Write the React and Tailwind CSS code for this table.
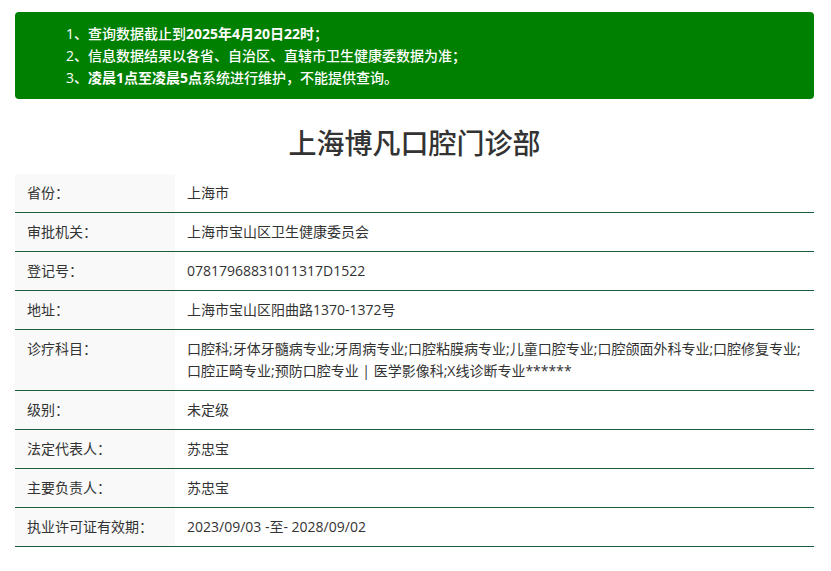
const ROWS = [
  { label: '省份：', value: '上海市' },
  { label: '审批机关：', value: '上海市宝山区卫生健康委员会' },
  { label: '登记号：', value: '07817968831011317D1522' },
  { label: '地址：', value: '上海市宝山区阳曲路1370-1372号' },
  {
    label: '诊疗科目：',
    value: (
      <>
        口腔科;牙体牙髓病专业;牙周病专业;口腔粘膜病专业;儿童口腔专业;口腔颌面外科专业;口腔修复专业;
        <br />
        口腔正畸专业;预防口腔专业 | 医学影像科;X线诊断专业******
      </>
    ),
  },
  { label: '级别：', value: '未定级' },
  { label: '法定代表人：', value: '苏忠宝' },
  { label: '主要负责人：', value: '苏忠宝' },
  { label: '执业许可证有效期：', value: '2023/09/03 -至- 2028/09/02' },
];

export default function App() {
  return (
    <div
      className="min-h-[571px] bg-white pl-[15px] pr-[17px] pt-[12px] text-[#333]"
      style={{ fontFamily: '"Open Sans", "Noto Sans CJK SC", sans-serif' }}
    >
      {/* notice */}
      <div className="rounded-[4px] bg-[#008000] pl-[51px] pt-[11px] pb-[10px] text-[14px] leading-[22px] font-medium text-white">
        <p>
          1、查询数据截止到<b className="font-bold">2025年4月20日22时</b>；
        </p>
        <p>2、信息数据结果以各省、自治区、直辖市卫生健康委数据为准；</p>
        <p>
          3、<b className="font-bold">凌晨1点至凌晨5点</b>系统进行维护，不能提供查询。
        </p>
      </div>

      <h1 className="mt-[24px] mb-[11px] text-center text-[28px] leading-[40px] font-medium text-[#333]">
        上海博凡口腔门诊部
      </h1>

      <div className="text-[14px] leading-[22px]">
        {ROWS.map((r, i) => (
          <div key={i} className="flex border-b border-[#1f5c3e]">
            <div className="w-[160px] shrink-0 bg-[#f9f9f9] px-[12px] py-[8px]">{r.label}</div>
            <div className="flex-1 px-[12px] py-[8px]">{r.value}</div>
          </div>
        ))}
      </div>
    </div>
  );
}
